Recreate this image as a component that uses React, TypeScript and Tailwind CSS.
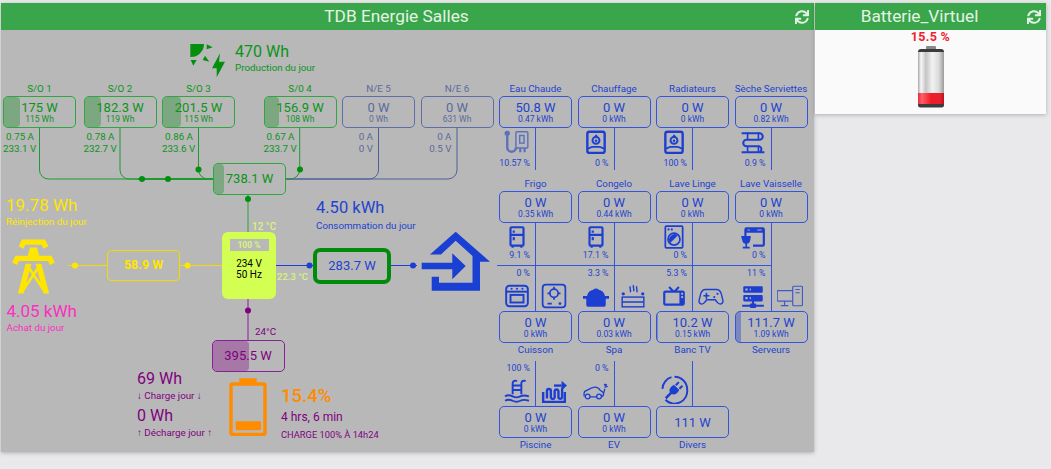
import { FaSync } from 'react-icons/fa'
import type { ReactNode } from 'react'

// Small wrapper for the 24x24 icons of the consumer rows
const Icon = ({ children, className = 'w-[26px] h-[26px]' }: { children: ReactNode; className?: string }) => (
  <svg viewBox="0 0 24 24" className={`${className} shrink-0 text-[#1d3fd1]`} fill="currentColor">
    {children}
  </svg>
)

const outline = { fill: 'none', stroke: 'currentColor', strokeWidth: 1.6 }

const Boiler = () => (
  <Icon>
    <g fill="none" stroke="currentColor">
      <rect x="4" y="2.500" width="16" height="19.500" rx="2" strokeWidth="2.200" />
      <circle cx="12" cy="10.500" r="3.200" strokeWidth="1.800" />
      <path d="M4 18c2.500 0 2.500-1.500 5-1.500h6c2.500 0 2.500 1.500 5 1.500" strokeWidth="1.600" />
    </g>
    <path d="M12 4.500c.6 1.200 1.800 1.700 1.800 3h-3.300c0-1.400 1.300-1.700 1.500-3z" />
    <circle cx="12" cy="10.800" r="1.200" />
  </Icon>
)

const Fridge = () => (
  <Icon>
    <path d="M9,21V22H7V21A2,2 0 0,1 5,19V4A2,2 0 0,1 7,2H17A2,2 0 0,1 19,4V19A2,2 0 0,1 17,21V22H15V21H9M7,4V9H17V4H7M7,19H17V11H7V19M8,12H10V15H8V12M8,6H10V8H8V6Z" />
  </Icon>
)

const icons: Record<string, ReactNode> = {
  boilerShower: (
    <Icon>
      <g fill="none" stroke="#5a72bd" strokeWidth="1.300">
        <rect x="11" y="2.500" width="11" height="15" rx="1" />
        <rect x="14.500" y="6" width="4" height="7" />
        <path d="M3 6v11a4 4 0 0 0 8 0" strokeWidth="2.200" />
        <path d="M15 17.500v4M19 17.500v4" strokeWidth="2" />
      </g>
      <circle cx="3" cy="4" r="2.500" fill="#5a72bd" />
    </Icon>
  ),
  boiler: <Boiler />,
  radiator: (
    <Icon>
      <g fill="none" stroke="currentColor" strokeWidth="1.900">
        <path d="M1.500 4H18a3 3 0 0 1 0 6H6a3 3 0 0 0 0 6h12a3 3 0 0 1 0 5.500" opacity="1" />
        <path d="M18 21.500H1.500M22.500 21.500H18" />
        <path d="M7 3v7M17 3v7M7 16v5M17 16v5" strokeWidth="1.500" />
      </g>
    </Icon>
  ),
  fridge: <Fridge />,
  washer: (
    <Icon>
      <g {...outline}>
        <rect x="4" y="2" width="16" height="20" rx="1" />
        <circle cx="12" cy="14" r="5.500" />
      </g>
      <circle cx="7" cy="5" r="1" />
      <circle cx="10" cy="5" r="1" />
      <path d="M8.500 17.500a5 5 0 0 1 7-7z" />
    </Icon>
  ),
  dishwasher: (
    <Icon>
      <path d="M6 3h15a2 2 0 0 1 2 2v14a2 2 0 0 1-2 2H12v-2h9V8H6v3H4V5a2 2 0 0 1 2-2m1 2v1h2V5H7m9 0v1h4V5h-4" />
      <path d="M1 11h9l-.5 4a4 4 0 0 1-3 3.300V21h2.500v1.500H2.500V21H5v-2.700A4 4 0 0 1 2 15z" />
    </Icon>
  ),
  oven: (
    <Icon>
      <g {...outline} strokeWidth="1.800">
        <rect x="2" y="2.500" width="20" height="19" rx="3" />
        <path d="M2 8h20" />
        <rect x="6" y="11" width="12" height="7" />
      </g>
      <circle cx="7" cy="5.300" r="1" />
      <circle cx="12" cy="5.300" r="1" />
      <circle cx="17" cy="5.300" r="1" />
    </Icon>
  ),
  hob: (
    <Icon>
      <g {...outline} strokeWidth="1.600">
        <rect x="1.500" y="1.500" width="21" height="21" rx="3" />
        <circle cx="12" cy="9.500" r="3.800" />
        <path d="M12 3.500v2M12 13.500v2M6 9.500h2M16 9.500h2M6 19h4" />
      </g>
      <circle cx="17.500" cy="19" r="1.300" />
    </Icon>
  ),
  pot: (
    <Icon>
      <path d="M12 5a3 3 0 0 1 2.500 1.300C17.500 6.800 19.800 9 20.300 12H24v2.500h-3V20a2 2 0 0 1-2 2H5a2 2 0 0 1-2-2v-5.500H0V12h3.700C4.200 9 6.500 6.800 9.500 6.300A3 3 0 0 1 12 5z" />
    </Icon>
  ),
  hotTub: (
    <Icon>
      <g {...outline} strokeWidth="1.300">
        <rect x="2" y="13" width="20" height="9" />
        <path d="M2 17.500h20M9.500 3c-1 2 1 3 0 5.500M12.500 2c-1 2 1 3 0 5.500M15.500 3c-1 2 1 3 0 5.500" />
      </g>
      <circle cx="3" cy="10" r="1.500" />
      <circle cx="21" cy="10" r="1.500" />
    </Icon>
  ),
  tv: (
    <Icon>
      <path d="M8.160,3L6.750,4.410L9.340,7H4C2.890,7 2,7.890 2,9V19C2,20.110 2.890,21 4,21H20C21.110,21 22,20.110 22,19V9C22,7.890 21.110,7 20,7H14.660L17.250,4.410L15.840,3L12,6.840L8.160,3M4,9H17V19H4V9M19.500,9A1,1 0 0,1 20.500,10A1,1 0 0,1 19.500,11A1,1 0 0,1 18.500,10A1,1 0 0,1 19.500,9M19.500,12A1,1 0 0,1 20.500,13A1,1 0 0,1 19.500,14A1,1 0 0,1 18.500,13A1,1 0 0,1 19.500,12Z" />
    </Icon>
  ),
  gamepad: (
    <Icon>
      <path {...outline} strokeWidth="1.300" d="M7 6h10c2.500 0 3.800 1.500 4.500 4l1.500 6c.4 2-1 3.500-2.500 3.500-1.300 0-2.200-.8-3-2l-1.500-2h-8L6.500 17.500c-.8 1.200-1.700 2-3 2C2 19.500.6 18 1 16l1.500-6C3.200 7.500 4.500 6 7 6z" />
      <path d="M7 9h1.500v2H10.500v1.500H8.500v2H7v-2H5V11h2zM15 12a1 1 0 1 1 0 2 1 1 0 0 1 0-2M18 9a1 1 0 1 1 0 2 1 1 0 0 1 0-2" />
    </Icon>
  ),
  server: (
    <Icon>
      <path d="M13,19H14A1,1 0 0,1 15,20H22V22H15A1,1 0 0,1 14,23H10A1,1 0 0,1 9,22H2V20H9A1,1 0 0,1 10,19H11V17H4A1,1 0 0,1 3,16V12A1,1 0 0,1 4,11H20A1,1 0 0,1 21,12V16A1,1 0 0,1 20,17H13V19M4,3H20A1,1 0 0,1 21,4V8A1,1 0 0,1 20,9H4A1,1 0 0,1 3,8V4A1,1 0 0,1 4,3M9,7H10V5H9V7M9,15H10V13H9V15M5,5V7H7V5H5M5,13V15H7V13H5Z" />
    </Icon>
  ),
  desktop: (
    <Icon>
      <g fill="none" stroke="#3f5ac4" strokeWidth="1.100">
        <rect x="14.500" y="3" width="9" height="18" rx="1" />
        <path d="M14.500 7H1a.8.8 0 0 0-.8.8V16a.8.8 0 0 0 .8.8h13.500M7 17v3.500M3.500 20.800h7M17 6h4M17 9h4" />
      </g>
    </Icon>
  ),
  pool: (
    <Icon>
      <g fill="none" stroke="currentColor" strokeWidth="1.800">
        <path d="M8 15V5a2.500 2.500 0 0 1 4-2M16 15V5a2.500 2.500 0 0 1 4-2M8 7h8M8 11h8" />
        <path d="M1 17c3-2 5-1 7 0s5 1 7 0 5-1 8 0M1 21c3-2 5-1 7 0s5 1 7 0 5-1 8 0" />
      </g>
    </Icon>
  ),
  poolPump: (
    <Icon>
      <g fill="none" stroke="currentColor" strokeWidth="2.200">
        <path d="M2 13v9h20v-9" />
        <path d="M5.500 19v-7a1.800 1.800 0 0 1 3.600 0v6a1.800 1.800 0 0 0 3.500 0v-6a1.800 1.800 0 0 1 3.500 0v6a1.800 1.800 0 0 0 3.400 0V9" />
        <path d="M12 7h7" />
      </g>
      <path d="M19 2.500l5 4.500-5 4.500z" />
    </Icon>
  ),
  ev: (
    <Icon>
      <path {...outline} strokeWidth="1.200" d="M1 17v-3c0-1.500 1-2 2.500-2.500C6 10 8 8.500 11 8.500c2.500 0 4 1.200 5 3 1.500 1 3 1.300 3 3 0 1.300-.7 2.500-2 2.500M6.500 17.500h6.500M19 14c1-2 1-3 1-4" />
      <circle {...outline} strokeWidth="1.200" cx="4.300" cy="17" r="2.200" />
      <circle {...outline} strokeWidth="1.200" cx="14.800" cy="17" r="2.200" />
      <path d="M20 5l2.500 1-1 1 2 1-4 1.300 1-2-1.500-.5z" />
    </Icon>
  ),
  plug: (
    <Icon className="w-[29px] h-[29px]">
      <path {...outline} d="M2 11.500a10.500 10.500 0 0 1 7.500-9.700M4.500 20.500A10.500 10.500 0 0 0 22.500 12 10.500 10.500 0 0 0 12 1.500" />
      <path d="M9.500 9.500l2-1.500 4.500 4.500-1.500 2c-1.700 1.900-3.500 2-4.800 1.300L5.500 20 4 18.500l4.200-4.200c-.7-1.300-.5-3.100 1.300-4.800z" />
      <path d="M12.500 7.800l2.500-2.500 1.200 1.200-2.500 2.500zM15.500 10.800l2.500-2.500 1.200 1.200-2.500 2.500z" />
    </Icon>
  ),
}

type Load = { name: string; power: string; energy?: string; pct?: string; left?: string; right?: string; fill?: string }

const rowOne: Load[] = [
  { name: 'Eau Chaude', power: '50.8 W', energy: '0.47 kWh', pct: '10.57 %', left: 'boilerShower' },
  { name: 'Chauffage', power: '0 W', energy: '0 kWh', pct: '0 %', left: 'boiler' },
  { name: 'Radiateurs', power: '0 W', energy: '0 kWh', pct: '100 %', left: 'boiler' },
  { name: 'Sèche Serviettes', power: '0 W', energy: '0.82 kWh', pct: '0.9 %', left: 'radiator' },
]
const rowTwo: Load[] = [
  { name: 'Frigo', power: '0 W', energy: '0.35 kWh', pct: '9.1 %', left: 'fridge' },
  { name: 'Congelo', power: '0 W', energy: '0.44 kWh', pct: '17.1 %', left: 'fridge' },
  { name: 'Lave Linge', power: '0 W', energy: '0 kWh', pct: '0 %', left: 'washer' },
  { name: 'Lave Vaisselle', power: '0 W', energy: '0 kWh', pct: '0 %', left: 'dishwasher' },
]
const rowThree: Load[] = [
  { name: 'Cuisson', power: '0 W', energy: '0 kWh', pct: '0 %', left: 'oven', right: 'hob' },
  { name: 'Spa', power: '0 W', energy: '0.03 kWh', pct: '3.3 %', left: 'pot', right: 'hotTub' },
  { name: 'Banc TV', power: '10.2 W', energy: '0.15 kWh', pct: '5.3 %', left: 'tv', right: 'gamepad', fill: 'w-[1px]' },
  { name: 'Serveurs', power: '111.7 W', energy: '1.09 kWh', pct: '11 %', left: 'server', right: 'desktop', fill: 'w-[5px]' },
]
const rowFour: Load[] = [
  { name: 'Piscine', power: '0 W', energy: '0 kWh', pct: '100 %', left: 'pool', right: 'poolPump' },
  { name: 'EV', power: '0 W', energy: '0 kWh', pct: '0 %', left: 'ev' },
  { name: 'Divers', power: '111 W', left: 'plug' },
]

const LoadBox = ({ load }: { load: Load }) => (
  <div className={`relative h-[32px] w-[73px] rounded-[5px] border border-[#3355dd] overflow-hidden flex flex-col items-center justify-center text-[#2343cf] ${load.energy ? 'pt-[2px]' : ''}`}>
    {load.fill && <div className={`absolute left-0 top-0 bottom-0 ${load.fill} bg-[#1d3fd1]/40`} />}
    <span className="text-[13px] leading-[13px]">{load.power}</span>
    {load.energy && <span className="text-[8.500px] leading-[11px]">{load.energy}</span>}
  </div>
)

// Rows one and two: name, box, then the icon and share hanging under it
const LoadDown = ({ load, pctClass }: { load: Load; pctClass: string }) => (
  <div className="w-[73px]">
    <div className="h-[13px] text-[9.800px] leading-[11px] text-center whitespace-nowrap text-[#2343cf]">{load.name}</div>
    <LoadBox load={load} />
    <div className="flex h-[42px]">
      <div className="w-[36px] pt-[1px] flex flex-col items-center">
        {icons[load.left!]}
        <div className={`w-full pr-[5px] text-right text-[8.800px] leading-[11px] text-[#2343cf] whitespace-nowrap ${pctClass}`}>{load.pct}</div>
      </div>
      <div className="border-l border-[#3355dd]" />
    </div>
  </div>
)

// Rows three and four: icons and share above, box, then the name
const LoadUp = ({ load }: { load: Load }) => (
  <div className="w-[73px]">
    <div className="flex h-[45px]">
      <div className="w-[36px] flex flex-col justify-between items-center pb-[2px] pt-[2px]">
        <div className="w-full h-[11px] pr-[5px] text-right text-[8.800px] leading-[11px] text-[#2343cf] whitespace-nowrap">{load.pct}</div>
        {icons[load.left!]}
      </div>
      <div className="border-l border-[#3355dd]" />
      <div className="flex-1 flex flex-col justify-end items-center pb-[2px]">{load.right && icons[load.right]}</div>
    </div>
    <LoadBox load={load} />
    <div className="h-[13px] text-[9.800px] leading-[13px] text-center whitespace-nowrap text-[#2343cf]">{load.name}</div>
  </div>
)

const LoadRow = ({ children, className = '' }: { children: ReactNode; className?: string }) => (
  <div className={`grid grid-cols-[73px_73px_73px_73px] gap-x-[5.5px] ${className}`}>{children}</div>
)

type Panel = { label: string; power: string; energy: string; amps: string; volts: string; pos: string; fill?: string; tone: string; border: string }

const green = 'text-[#0a9419]'
const slate = 'text-[#5a6a9e]'

const panels: Panel[] = [
  { label: 'S/O 1', power: '175 W', energy: '115 Wh', amps: '0.75 A', volts: '233.1 V', pos: 'left-[2px]', fill: 'w-[16px]', tone: green, border: 'border-[#2ea83e]' },
  { label: 'S/O 2', power: '182.3 W', energy: '119 Wh', amps: '0.78 A', volts: '232.7 V', pos: 'left-[82.500px]', fill: 'w-[16.500px]', tone: green, border: 'border-[#2ea83e]' },
  { label: 'S/O 3', power: '201.5 W', energy: '115 Wh', amps: '0.86 A', volts: '233.6 V', pos: 'left-[161px]', fill: 'w-[18px]', tone: green, border: 'border-[#2ea83e]' },
  { label: 'S/0 4', power: '156.9 W', energy: '108 Wh', amps: '0.67 A', volts: '233.7 V', pos: 'left-[262.500px]', fill: 'w-[14px]', tone: green, border: 'border-[#2ea83e]' },
  { label: 'N/E 5', power: '0 W', energy: '0 Wh', amps: '0 A', volts: '0 V', pos: 'left-[341px]', tone: slate, border: 'border-[#5f6eaa]' },
  { label: 'N/E 6', power: '0 W', energy: '631 Wh', amps: '0 A', volts: '0.5 V', pos: 'left-[419.500px]', tone: slate, border: 'border-[#5f6eaa]' },
]

const SolarPanel = ({ p }: { p: Panel }) => (
  <div className={`absolute top-[52px] w-[73px] ${p.pos} ${p.tone}`}>
    <div className="h-[14px] text-[9.800px] leading-[13px] text-center">{p.label}</div>
    <div className={`relative h-[32px] pt-[2px] rounded-[5px] border ${p.border} overflow-hidden flex flex-col items-center justify-center`}>
      {p.fill && <div className={`absolute left-0 top-0 bottom-0 ${p.fill} bg-[#0a8a1a]/35 rounded-[4px]`} />}
      <span className="relative text-[13px] leading-[13px]">{p.power}</span>
      <span className="relative text-[8.500px] leading-[11px]">{p.energy}</span>
    </div>
    <div className="w-[36px] pt-[3px] pr-[5px] text-right text-[9.800px] leading-[11.700px] whitespace-nowrap">
      <div>{p.amps}</div>
      <div>{p.volts}</div>
    </div>
  </div>
)

const Dot = ({ x, y, c }: { x: number; y: number; c: string }) => <circle cx={x} cy={y} r="3" fill={c} />

// Wires and dots of the power flow, in page coordinates
const Wires = () => (
  <svg viewBox="1 30 496 422" className="absolute inset-0 w-[496px] h-[422px]" fill="none">
    <g stroke="#4f5f9c">
      <path d="M378.500 128V170a9 9 0 0 1-9 9H286" />
      <path d="M457 128V170a9 9 0 0 1-9 9H286" />
    </g>
    <g stroke="#1f9a30">
      <path d="M39.500 128V170a9 9 0 0 0 9 9H213" />
      <path d="M120 128V170a9 9 0 0 0 9 9H213" />
      <path d="M198.500 128V169.500a9.500 9.500 0 0 0 9 9.500H213" />
      <path d="M299.700 128V169.500a9.500 9.500 0 0 1-9 9.500H286" />
      <path d="M138 179H213" strokeWidth="2" />
    </g>
    <path d="M248 194V232" stroke="#2f9f3f" />
    <path d="M68 265.500H107M180 265.500H222" stroke="#f2dc00" />
    <path d="M276 265.500H313M390 265.500H417" stroke="#1d3fd1" />
    <path d="M248 299V340" stroke="#8a1f9a" />
    <g>
      <Dot x={142} y={179} c="#008f0f" />
      <Dot x={168} y={179} c="#008f0f" />
      <Dot x={198.500} y={169.500} c="#008f0f" />
      <Dot x={300} y={169.500} c="#008f0f" />
      <Dot x={248} y={199} c="#008f0f" />
      <Dot x={75} y={265.500} c="#ffe600" />
      <Dot x={187.500} y={265.500} c="#ffe600" />
      <Dot x={309.500} y={265.500} c="#1d3fd1" />
      <Dot x={413} y={265.500} c="#1d3fd1" />
      <Dot x={248} y={310.500} c="#800080" />
    </g>
  </svg>
)

const SolarIcon = () => (
  <svg viewBox="189 43 38 36" className="absolute left-[188px] top-[13px] w-[38px] h-[36px]" fill="#058f0f">
    <path d="M190.300 44H204A13 13 0 0 1 190.300 57Z" />
    <polygon points="206.700,44.300 212.700,47.300 206.700,49.300" />
    <polygon points="205,55.700 209.300,61.700 202.700,60" />
    <polygon points="190.700,60 196.700,60 193.300,65.700" />
    <polygon points="220,53.300 212,68.300 216.700,68.300 216.700,77.300 225,61.700 219,61.700" />
  </svg>
)

const TowerIcon = () => (
  <svg viewBox="0 0 24 24" className="absolute left-[-0.500px] top-[203.500px] w-[65px] h-[65px]" fill="#ffe600">
    <path d="M8.280,5.450L6.500,4.550L7.760,2H16.230L17.500,4.550L15.720,5.440L15,4H9L8.280,5.450M18.620,8H14.090L13.300,5H10.700L9.910,8H5.380L4.100,10.550L5.890,11.440L6.620,10H17.380L18.100,11.450L19.890,10.560L18.620,8M17.770,22H15.700L15.460,21.100L12,15.900L8.530,21.100L8.300,22H6.230L9.120,11H11.190L10.830,12.350L12,14.100L13.160,12.350L12.810,11H14.880L17.770,22M11.400,15L10.500,13.650L9.320,18.130L11.400,15M14.680,18.120L13.500,13.640L12.600,15L14.680,18.120Z" />
  </svg>
)

const HomeIcon = () => (
  <svg viewBox="421 231 70 60" className="absolute left-[420px] top-[201px] w-[70px] h-[60px]" fill="#1a3fd3">
    <polygon points="455.700,231.700 490,261.700 480,261.700 480,290.700 431.700,290.700 431.700,276.700 439,276.700 439,282.700 472.500,282.700 472.500,256 455.700,240.700 441,254.500 430,254.500" />
    <polygon points="421.700,262.700 452.300,262.700 452.300,253.300 465.700,266 452.300,279.300 452.300,269.300 421.700,269.300" />
  </svg>
)

const BatteryIcon = () => (
  <svg viewBox="229 378 38 58" className="absolute left-[228px] top-[348px] w-[38px] h-[58px]" fill="#ff8c00">
    <rect x="239.300" y="378.300" width="17.400" height="6" rx="1" />
    <rect x="231" y="384" width="34" height="50.500" rx="1.500" fill="none" stroke="#ff8c00" strokeWidth="3.500" />
    <rect x="235.700" y="421.300" width="25.300" height="9" rx="1" />
  </svg>
)

const GlassBattery = () => (
  <svg viewBox="0 0 28 62" className="w-[28px] h-[62px] mt-[2px]">
    <defs>
      <linearGradient id="glass" x1="0" x2="1" y1="0" y2="0">
        <stop offset="0" stopColor="#a8a8a8" />
        <stop offset="0.12" stopColor="#f8f8f8" />
        <stop offset="0.3" stopColor="#c4c4c4" />
        <stop offset="0.55" stopColor="#f2f2f2" />
        <stop offset="0.8" stopColor="#dadada" />
        <stop offset="1" stopColor="#9a9a9a" />
      </linearGradient>
      <linearGradient id="charge" x1="0" x2="1" y1="0" y2="0">
        <stop offset="0" stopColor="#e0303c" />
        <stop offset="0.15" stopColor="#ff5f6a" />
        <stop offset="0.5" stopColor="#ee1c28" />
        <stop offset="0.85" stopColor="#e8202c" />
        <stop offset="1" stopColor="#b8141e" />
      </linearGradient>
    </defs>
    <rect x="9" y="0" width="10" height="4" rx="1" fill="#8a8a8a" />
    <path d="M1 6a3 3 0 0 1 3-3h20a3 3 0 0 1 3 3v1H1z" fill="#3a3a3a" />
    <rect x="1" y="6" width="26" height="53" fill="url(#glass)" />
    <rect x="1" y="47" width="26" height="12" fill="url(#charge)" />
    <path d="M1 58h26v1a2.500 2.500 0 0 1-2.500 2.500h-21A2.500 2.500 0 0 1 1 59z" fill="#3c3c3c" />
  </svg>
)

const Header = ({ title }: { title: string }) => (
  <div className="h-[27px] bg-[#3aa64b] flex items-center text-[#e4f3e6]">
    <div className="flex-1 text-center text-[17.300px] leading-[27px]">{title}</div>
    <div className="w-[22px] pr-[5px] flex justify-end">
      <FaSync className="w-[14px] h-[14px]" />
    </div>
  </div>
)

export default function App() {
  return (
    <div className="w-[1051px] h-[469px] overflow-hidden bg-[#e9e9eb] pt-[3px] pl-[1px] flex items-start gap-[1px] font-['Roboto',sans-serif]">
      <div className="w-[813px] shadow-[0_1px_4px_rgba(0,0,0,0.25)]">
        <Header title="TDB Energie Salles" />
        <div className="h-[422px] bg-[#b8b8b8] flex">
          {/* power flow diagram */}
          <div className="relative w-[496px] h-[422px]">
            <Wires />
            <SolarIcon />
            <div className="absolute left-[234px] top-[12px] text-[#0a9419] whitespace-nowrap">
              <div className="text-[16px] leading-[20px]">470 Wh</div>
              <div className="text-[9.800px] leading-[14px] -mt-[1px]">Production du jour</div>
            </div>

            {panels.map((p) => (
              <SolarPanel key={p.label} p={p} />
            ))}

            <div className="absolute left-[212px] top-[132.500px] w-[73px] h-[32px] rounded-[5px] border border-[#2ea83e] overflow-hidden flex items-center justify-center text-[#0a9419]">
              <div className="absolute left-0 top-0 bottom-0 w-[10px] bg-[#0a8a1a]/35 rounded-[4px]" />
              <span className="relative text-[13px]">738.1 W</span>
            </div>

            <div className="absolute left-[5px] top-[164px] text-[#ffe600] whitespace-nowrap">
              <div className="text-[17px] leading-[22px]">19.78 Wh</div>
              <div className="text-[9.800px] leading-[14px] -mt-[1px]">Réinjection du jour</div>
            </div>
            <TowerIcon />
            <div className="absolute left-[5.500px] top-[270px] text-[#fb2fc0] whitespace-nowrap">
              <div className="text-[17px] leading-[22px]">4.05 kWh</div>
              <div className="text-[9.800px] leading-[14px] -mt-[1px]">Achat du jour</div>
            </div>

            <div className="absolute left-[106px] top-[220px] w-[73px] h-[31px] rounded-[4px] border border-[#f2dc00] flex items-center justify-center text-[12.500px] font-bold text-[#ffe600]">
              58.9 W
            </div>

            <div className="absolute left-[251px] top-[189px] text-[10px] font-medium text-[#d6f57a]">12 °C</div>
            <div className="absolute left-[221px] top-[202px] w-[54px] h-[67px] rounded-[6px] bg-[#d2ff52] flex flex-col items-center pt-[7px]">
              <div className="w-[39px] h-[12px] bg-[#b8b8b8] text-center text-[8.500px] leading-[12px] font-bold text-[#d6f57a]">100 %</div>
              <div className="mt-[7px] text-[10px] leading-[11px] text-black text-center">
                <div>234 V</div>
                <div>50 Hz</div>
              </div>
            </div>
            <div className="absolute left-[276px] top-[240px] text-[9.500px] font-medium text-[#d6f57a] whitespace-nowrap">22.3 °C</div>
            <div className="absolute left-[254px] top-[295px] text-[9.800px] text-[#800080]">24°C</div>

            <div className="absolute left-[315px] top-[167px] text-[#2343cf] whitespace-nowrap">
              <div className="text-[16.500px] leading-[22px]">4.50 kWh</div>
              <div className="text-[9.800px] leading-[14px]">Consommation du jour</div>
            </div>

            <div className="absolute left-[312px] top-[217.500px] w-[78px] h-[36px] rounded-[7px] border-[4px] border-[#008c0a] flex items-center justify-center text-[13px] text-[#2343cf]">
              283.7 W
            </div>
            <HomeIcon />

            <div className="absolute left-[210.500px] top-[310px] w-[73px] h-[32px] rounded-[5px] border border-[#8a1f9a] overflow-hidden flex items-center justify-center text-[#800080]">
              <div className="absolute left-0 top-0 bottom-0 w-[36px] bg-[#800080]/35 rounded-[4px]" />
              <span className="relative text-[13px]">395.5 W</span>
            </div>

            <div className="absolute left-[136px] top-[339px] text-[#800080] whitespace-nowrap">
              <div className="text-[16px] leading-[20px]">69 Wh</div>
              <div className="text-[9.800px] leading-[14px]">↓ Charge jour ↓</div>
              <div className="text-[16px] leading-[20px] mt-[3px]">0 Wh</div>
              <div className="text-[9.800px] leading-[14px]">↑ Décharge jour ↑</div>
            </div>
            <BatteryIcon />
            <div className="absolute left-[280px] top-[354px] text-[#800080] whitespace-nowrap">
              <div className="text-[18.500px] leading-[24px] text-[#ff8c00] font-medium">15.4%</div>
              <div className="text-[12px] leading-[16px] mt-[1px]">4 hrs, 6 min</div>
              <div className="text-[9.300px] leading-[14px] mt-[3px]">CHARGE 100% À 14h24</div>
            </div>
          </div>

          {/* consumers */}
          <div className="pl-[2px] pt-[53px]">
            <LoadRow className="mb-[8px]">
              {rowOne.map((l) => (
                <LoadDown key={l.name} load={l} pctClass="mt-[3px]" />
              ))}
            </LoadRow>
            <LoadRow>
              {rowTwo.map((l) => (
                <LoadDown key={l.name} load={l} pctClass="mt-0" />
              ))}
            </LoadRow>
            <div className="h-px w-[275px] -ml-[2px] bg-[#3355dd]" />
            <LoadRow>
              {rowThree.map((l) => (
                <LoadUp key={l.name} load={l} />
              ))}
            </LoadRow>
            <LoadRow className="mt-[5px]">
              {rowFour.map((l) => (
                <LoadUp key={l.name} load={l} />
              ))}
            </LoadRow>
          </div>
        </div>
      </div>

      <div className="w-[231px] shadow-[0_1px_4px_rgba(0,0,0,0.25)]">
        <Header title="Batterie_Virtuel" />
        <div className="h-[84px] bg-[#fafafa] flex flex-col items-center">
          <div className="text-[12.500px] leading-[14px] font-bold text-[#f0202e] tracking-[0.3px]">15.5 %</div>
          <GlassBattery />
        </div>
      </div>
    </div>
  )
}
